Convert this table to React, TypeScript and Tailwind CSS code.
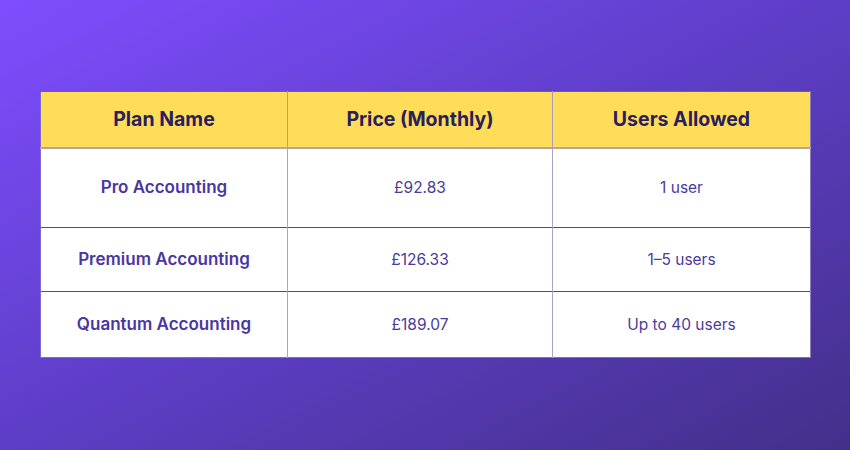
const rows = [
  { plan: 'Pro Accounting', price: '£92.83', users: '1 user', h: 'h-[80px]' },
  { plan: 'Premium Accounting', price: '£126.33', users: '1–5 users', h: 'h-[64px]' },
  { plan: 'Quantum Accounting', price: '£189.07', users: 'Up to 40 users', h: 'h-[66px]' },
];

export default function App() {
  return (
    <div
      className="w-[850px] h-[450px] bg-linear-to-br from-[#7f4dff] via-[#5d3ec6] to-[#442f8a] pt-[91px] pl-[40px]"
      style={{ fontFamily: 'Inter, "Noto Sans", sans-serif' }}
    >
      <table className="w-[770px] border-collapse bg-white table-fixed">
        <colgroup>
          <col className="w-[247px]" />
          <col className="w-[265px]" />
          <col className="w-[258px]" />
        </colgroup>
        <thead>
          <tr className="h-[56px] bg-[#ffdd59] border-b-2 border-b-[#b5a49a]">
            <th className="text-[19.5px] font-bold text-[#2a1e5c] border-r border-r-[#a89db8] border-l border-l-[#7d6bd0] border-t border-t-[#6e55cc]">Plan Name</th>
            <th className="text-[19.5px] font-bold text-[#2a1e5c] border-r border-r-[#a89db8] border-t border-t-[#6e55cc]">Price (Monthly)</th>
            <th className="text-[19.5px] font-bold text-[#2a1e5c] border-r border-r-[#8d7cc0] border-t border-t-[#6e55cc]">Users Allowed</th>
          </tr>
        </thead>
        <tbody>
          {rows.map((r, i) => (
            <tr key={r.plan} className={`${r.h} ${i < rows.length - 1 ? 'border-b border-b-[#54459a]' : 'border-b border-b-[#7d72b4]'}`}>
              <td className="text-center text-[17px] font-semibold text-[#4a36a3] border-r border-r-[#a9a3cf] border-l border-l-[#7d6bd0]">{r.plan}</td>
              <td className="text-center text-[15.5px] text-[#4b3b9c] border-r border-r-[#a9a3cf]">{r.price}</td>
              <td className="text-center text-[15.5px] text-[#4b3b9c] border-r border-r-[#8d7cc0]">{r.users}</td>
            </tr>
          ))}
        </tbody>
      </table>
    </div>
  );
}
